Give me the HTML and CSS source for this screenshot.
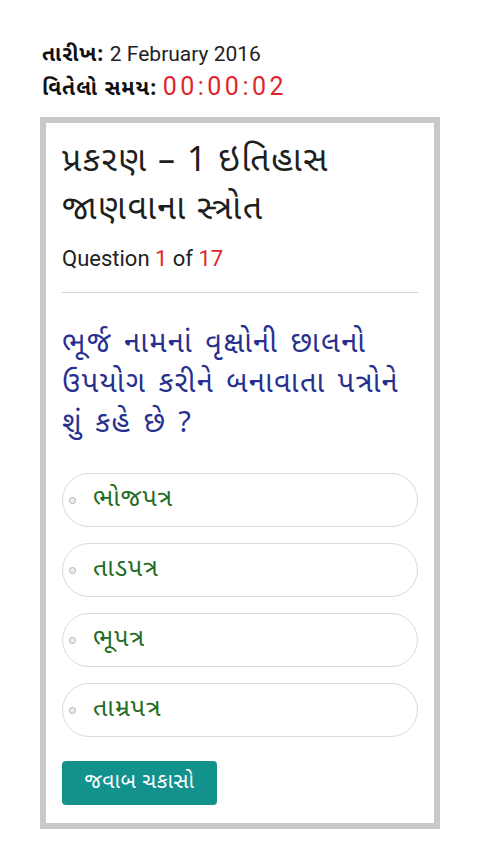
FILE: index.html
```html
<!DOCTYPE html>
<html lang="gu">
<head>
<meta charset="utf-8">
<link rel="stylesheet" href="styles.css">
</head>
<body>
<div class="meta">
  <div class="meta-row"><b class="label">તારીખ:</b> <span class="date">2 February 2016</span></div>
  <div class="meta-row"><b class="label">વિતેલો સમય:</b> <span class="timer">00:00:02</span></div>
</div>
<div class="card">
  <h1 class="title">પ્રકરણ – 1 ઇતિહાસ<br>જાણવાના સ્ત્રોત</h1>
  <div class="count">Question <span class="red">1</span> of <span class="red">17</span></div>
  <hr class="divider">
  <p class="question">ભૂર્જ નામનાં વૃક્ષોની છાલનો<br>ઉપયોગ કરીને બનાવાતા પત્રોને<br>શું કહે છે ?</p>
  <ul class="options">
    <li class="option"><span class="radio"></span><span class="opt-text">ભોજપત્ર</span></li>
    <li class="option"><span class="radio"></span><span class="opt-text">તાડપત્ર</span></li>
    <li class="option"><span class="radio"></span><span class="opt-text">ભૂપત્ર</span></li>
    <li class="option"><span class="radio"></span><span class="opt-text">તામ્રપત્ર</span></li>
  </ul>
  <button class="check">જવાબ ચકાસો</button>
</div>
</body>
</html>
```
FILE: styles.css
```css
html, body {
  margin: 0;
  padding: 0;
  background: #ffffff;
}
body {
  font-family: "Noto Sans Gujarati", Roboto, "Noto Sans", "Liberation Sans", sans-serif;
  color: #222;
  padding: 40px 40px 0 40px;
}
.meta {
  padding-left: 2px;
}
.meta-row {
  height: 32px;
  font-size: 21px;
  line-height: 32px;
  white-space: nowrap;
}
.meta-row + .meta-row {
  margin-top: 2px;
}
.label {
  font-weight: 700;
  color: #111;
  letter-spacing: 1px;
}
.date {
  font-family: Roboto, "Liberation Sans", sans-serif;
  font-size: 21px;
  line-height: 1;
  color: #222;
}
.timer {
  font-family: Roboto, "Liberation Sans", sans-serif;
  font-size: 25px;
  line-height: 1;
  color: #e0262b;
  letter-spacing: 3.5px;
}
.card {
  margin-top: 11px;
  width: 400px;
  box-sizing: border-box;
  border: 6px solid #c9c9c9;
  padding: 16px 16px 18px 16px;
}
.title {
  margin: 0;
  font-size: 34px;
  font-weight: 400;
  line-height: 48px;
  color: #1e1e1e;
  letter-spacing: 1.5px;
}
.count {
  font-family: Roboto, "Liberation Sans", sans-serif;
  font-size: 22px;
  line-height: 28px;
  color: #222;
  margin-top: 10px;
}
.red {
  color: #e0262b;
}
.divider {
  border: 0;
  border-top: 1px solid #d4d4d4;
  margin: 19px 0 32px 0;
}
.question {
  margin: 0;
  font-size: 29px;
  line-height: 40px;
  color: #27308f;
  letter-spacing: 1.5px;
  word-spacing: 3px;
}
.options {
  list-style: none;
  margin: 28px 0 0 0;
  padding: 0;
  display: flex;
  flex-direction: column;
  gap: 16px;
}
.option {
  height: 54px;
  box-sizing: border-box;
  border: 1px solid #d9d9d9;
  border-radius: 27px;
  display: flex;
  align-items: center;
  padding-left: 6px;
  gap: 17px;
}
.radio {
  width: 5px;
  height: 5px;
  border: 1px solid #b0b0b0;
  background: #eeeeee;
  border-radius: 50%;
  flex: none;
}
.opt-text {
  font-size: 25px;
  color: #236b23;
  letter-spacing: 1px;
}
.check {
  margin-top: 24px;
  height: 44px;
  width: 155px;
  padding: 0;
  border: 0;
  border-radius: 4px;
  background: #13918d;
  color: #ffffff;
  font-family: "Noto Sans Gujarati", "Noto Sans", sans-serif;
  font-size: 21px;
  letter-spacing: 0.5px;
  display: block;
}
```
